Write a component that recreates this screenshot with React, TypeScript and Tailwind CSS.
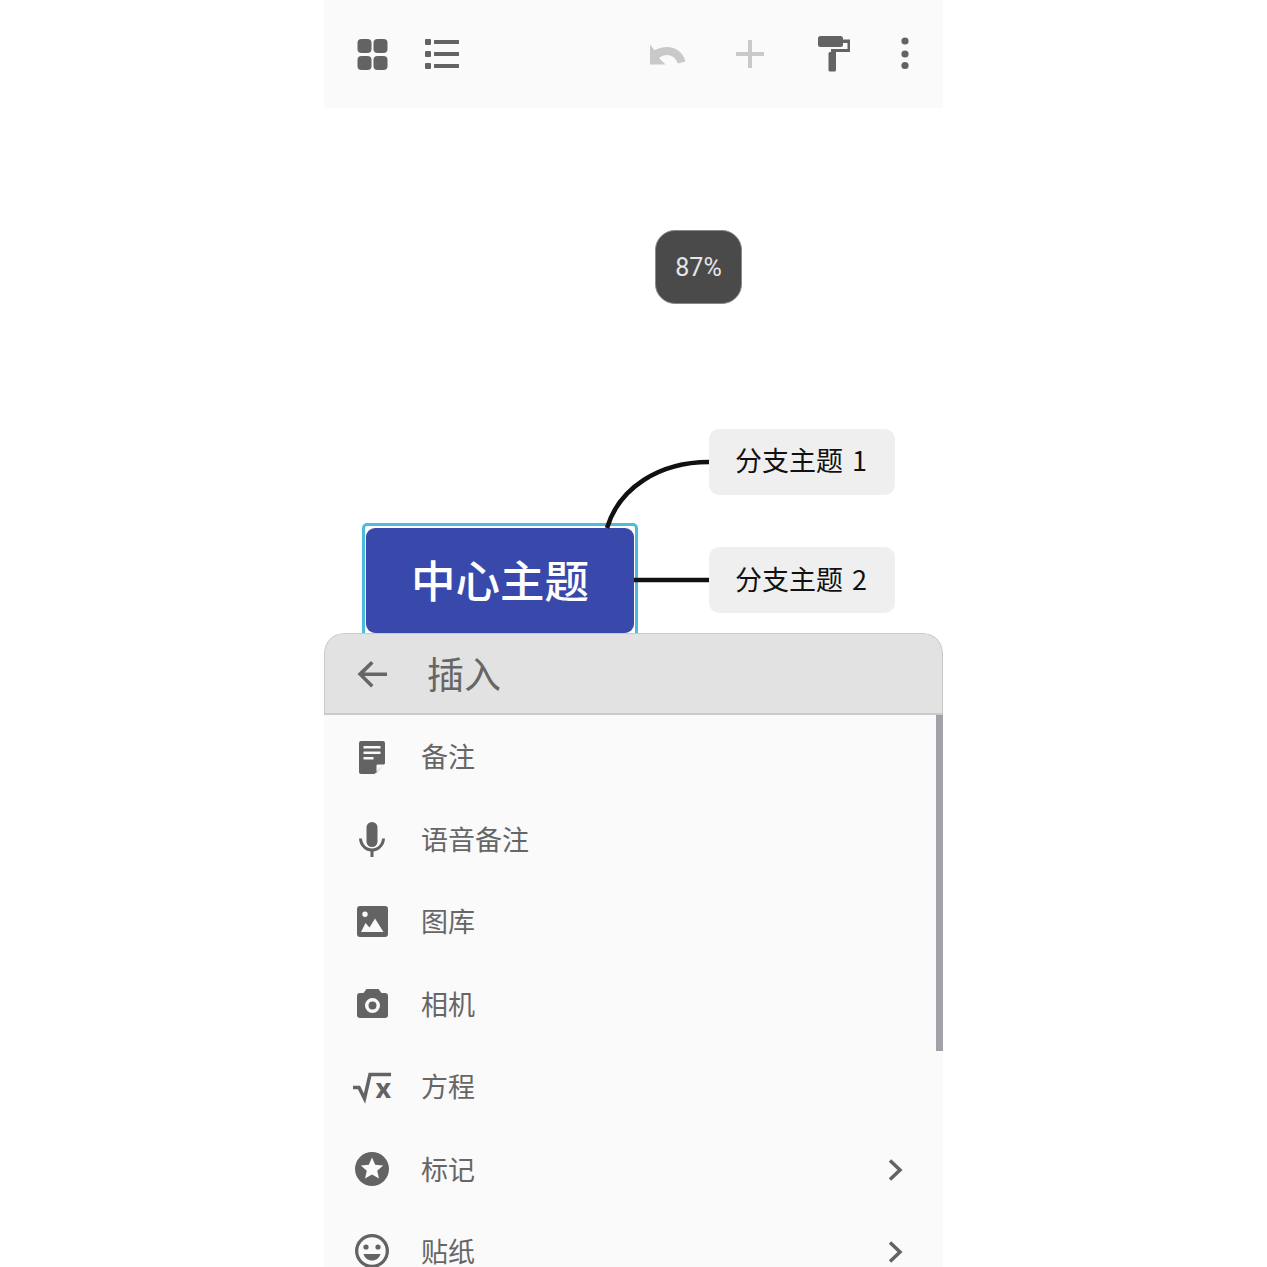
import type { ReactNode } from 'react'

function Icon({ children, className = 'text-[#636363]' }: { children: ReactNode; className?: string }) {
  return (
    <svg viewBox="0 0 48 48" fill="currentColor" className={`h-12 w-12 shrink-0 ${className}`}>
      {children}
    </svg>
  )
}

const menu = [
  {
    label: '备注',
    icon: (
      <path
        fillRule="evenodd"
        d="M13 8h22a2 2 0 0 1 2 2v20.500L26.500 41H13a2 2 0 0 1-2-2V10a2 2 0 0 1 2-2zm2.500 5v2.500h17V13h-17zm0 5.500V21h17v-2.500h-17zm0 5.500v2.500h10V24h-10zM28.500 39.500l7.500-8h-6.500a1 1 0 0 0-1 1v7z"
      />
    ),
  },
  {
    label: '语音备注',
    icon: (
      <>
        <rect x="18.500" y="6" width="11" height="25" rx="5.500" />
        <path d="M11 22.500h3c.3 6 4.800 10 10 10s9.700-4 10-10h3c-.3 7-5.500 12.300-11.500 13V41h-3v-5.500C16.500 34.800 11.300 29.500 11 22.500z" />
      </>
    ),
  },
  {
    label: '图库',
    icon: (
      <path
        fillRule="evenodd"
        d="M12 8h25a3 3 0 0 1 3 3v25a3 3 0 0 1-3 3H12a3 3 0 0 1-3-3V11a3 3 0 0 1 3-3zm7.700 8.300a2.700 2.700 0 1 0-5.400 0 2.700 2.700 0 0 0 5.400 0zM13 34h22.500L27 20.500l-5.500 9-4-4.500L13 34z"
      />
    ),
  },
  {
    label: '相机',
    icon: (
      <path
        fillRule="evenodd"
        d="M18.500 8h12l3 4H37a3 3 0 0 1 3 3v19a3 3 0 0 1-3 3H12a3 3 0 0 1-3-3V15a3 3 0 0 1 3-3h3.500l3-4zm6 9a7.500 7.500 0 1 0 0 15 7.500 7.500 0 0 0 0-15zm0 3.500a4 4 0 1 1 0 8 4 4 0 0 1 0-8z"
      />
    ),
  },
  {
    label: '方程',
    icon: (
      <>
        <path d="M5 24.500h6l5.500 11L22 11.500h21" fill="none" stroke="currentColor" strokeWidth="3.500" />
        <text x="27.500" y="35" fontSize="27" fontWeight="700" fontFamily="Noto Sans, sans-serif">x</text>
      </>
    ),
  },
  {
    label: '标记',
    chevron: true,
    icon: (
      <path
        fillRule="evenodd"
        d="M24 6a17 17 0 1 1 0 34 17 17 0 0 1 0-34zm0 5.500l-3.200 7.300-8 .7 6 5.300-1.800 7.800 7-4.200 7 4.200-1.800-7.800 6-5.300-8-.7-3.200-7.300z"
      />
    ),
  },
  {
    label: '贴纸',
    chevron: true,
    icon: (
      <>
        <path
          fillRule="evenodd"
          d="M24 6a17 17 0 1 1 0 34 17 17 0 0 1 0-34zm0 3.300a13.700 13.700 0 1 0 0 27.400 13.700 13.700 0 0 0 0-27.400z"
        />
        <circle cx="18" cy="19" r="2.600" />
        <circle cx="30" cy="19" r="2.600" />
        <path d="M15.500 26h17c-1 4-4.500 6.500-8.500 6.500s-7.500-2.500-8.500-6.500z" />
      </>
    ),
  },
]

function Toolbar() {
  return (
    <div className="flex h-[108px] items-center bg-[#fafafa] pl-6 pr-[14px]">
      <Icon>
        <rect x="9.500" y="9" width="14" height="14" rx="4" />
        <rect x="25.500" y="9" width="14" height="14" rx="4" />
        <rect x="9.500" y="26" width="14" height="14" rx="4" />
        <rect x="25.500" y="26" width="14" height="14" rx="4" />
      </Icon>
      <div className="ml-[21px]">
        <Icon>
          <rect x="8" y="9" width="6" height="6" rx="1" />
          <rect x="8" y="21" width="6" height="6" rx="1" />
          <rect x="8" y="33" width="6" height="6" rx="1" />
          <rect x="17" y="10" width="25" height="4" rx="0.500" />
          <rect x="17" y="22" width="25" height="4" rx="0.500" />
          <rect x="17" y="34" width="25" height="4" rx="0.500" />
        </Icon>
      </div>
      <div className="ml-auto">
        <Icon className="text-[#c9c9c9]">
          <path d="M7 14.500v20h15.500l-6.500-6.500c2.500-2 5.200-3 8-3 4.500 0 9 2.700 10.800 8.500l7.700-2C40 22 32.500 17 24 17c-4.800 0-9.200 1.600-12.500 3.300L7 14.500z" />
        </Icon>
      </div>
      <div className="ml-[35px]">
        <Icon className="text-[#c9c9c9]">
          <rect x="22" y="10" width="4" height="28" rx="0.500" />
          <rect x="10" y="22" width="28" height="4" rx="0.500" />
        </Icon>
      </div>
      <div className="ml-[35px]">
        <Icon>
          <rect x="9" y="6" width="25" height="11" rx="2.500" />
          <path d="M34 9.500h7v12.500H27v5h-5v-8h16.500V13H34z" />
          <rect x="19.500" y="22" width="7.500" height="19.500" rx="1.500" />
        </Icon>
      </div>
      <div className="ml-6">
        <Icon>
          <circle cx="24" cy="11" r="3.600" />
          <circle cx="24" cy="24" r="3.600" />
          <circle cx="24" cy="35.500" r="3.600" />
        </Icon>
      </div>
    </div>
  )
}

function Canvas() {
  return (
    <div className="relative h-[525px] bg-white">
      <div className="absolute left-[331px] top-[122px] flex h-[74px] w-[87px] items-center justify-center rounded-[20px] border border-[#8a8a8a] bg-[#4a4a4a] pt-[2px] font-['Roboto',sans-serif] text-[25px] text-[#e6e6e6]">
        87%
      </div>
      <div className="absolute left-[38px] top-[415px] h-[120px] w-[276px] rounded-[5px] border-[3px] border-[#4dbbdc] px-px pt-[2px]">
        <div className="flex h-[105px] items-center justify-center rounded-[9px] bg-[#3949ab] pb-[3px] text-[44.500px] font-medium text-white">
          中心主题
        </div>
      </div>
      <svg viewBox="0 0 619 525" fill="none" stroke="#111111" strokeWidth="4.500" className="absolute inset-0 h-full w-full">
        <path d="M283 420C295 380 335 354 385 354" />
        <path d="M310 472H385" />
      </svg>
      <div className="absolute left-[385px] top-[321px] flex h-[66px] w-[186px] items-center rounded-[10px] bg-[#efefef] pb-[3px] pl-[26px] text-[27px] text-[#111111] [word-spacing:3px]">
        分支主题 1
      </div>
      <div className="absolute left-[385px] top-[439px] flex h-[66px] w-[186px] items-center rounded-[10px] bg-[#efefef] pb-px pl-[26px] text-[27px] text-[#111111] [word-spacing:3px]">
        分支主题 2
      </div>
    </div>
  )
}

function Panel() {
  return (
    <div className="relative z-10 h-[634px] overflow-hidden rounded-t-[20px] bg-[#fafafa]">
      <div className="flex h-[82px] items-center rounded-t-[20px] border-x border-t border-b-2 border-[#c9c9c9] bg-[#e2e2e2] pl-[23px]">
        <Icon className="text-[#666666]">
          <path d="M39 22.500H16.500l9-9-2.500-2.500L9.500 24 23 37.500l2.500-2.500-9-9H39z" />
        </Icon>
        <span className="ml-[31px] text-[37px] text-[#666666]">插入</span>
      </div>
      <div className="relative pt-px">
        {menu.map((row) => (
          <div key={row.label} className="flex h-[82.500px] items-center pl-6 pr-[35px]">
            <Icon>{row.icon}</Icon>
            <span className="ml-[25px] pb-[2px] text-[27px] text-[#666666]">{row.label}</span>
            {row.chevron && (
              <svg viewBox="0 0 24 24" fill="none" stroke="#636363" strokeWidth="3.500" className="ml-auto h-6 w-6">
                <path d="M6 2.500l10 9.500-10 9.500" />
              </svg>
            )}
          </div>
        ))}
        <div className="absolute right-0 top-0 h-[336px] w-[7px] bg-[#a1a1a9]" />
      </div>
    </div>
  )
}

export default function App() {
  return (
    <div className="flex h-[1267px] justify-center overflow-hidden bg-white font-['Noto_Sans_CJK_SC','Noto_Sans',sans-serif]">
      <div className="w-[619px]">
        <Toolbar />
        <Canvas />
        <Panel />
      </div>
    </div>
  )
}
